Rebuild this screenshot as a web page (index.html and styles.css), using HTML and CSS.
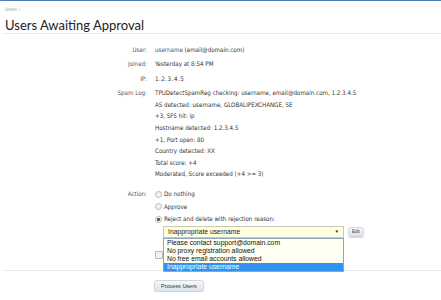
FILE: index.html
```html
<!DOCTYPE html>
<html lang="en">
<head>
    <meta charset="UTF-8">
    <meta name="viewport" content="width=device-width, initial-scale=1.0">
    <title>Users Awaiting Approval</title>
    <link rel="stylesheet" href="styles.css">
</head>
<body>
    <div class="topbar"></div>

    <div class="titlebar">
        <div class="crumbs">Users &rsaquo;</div>
        <h1>Users Awaiting Approval</h1>
    </div>

    <!-- Formulaire d'approbation -->
    <form class="approval">
        <dl class="row">
            <dt>User:</dt>
            <dd><a href="#">username</a> (email@domain.com)</dd>
        </dl>
        <dl class="row">
            <dt>Joined:</dt>
            <dd>Yesterday at 8:54 PM</dd>
        </dl>
        <dl class="row">
            <dt>IP:</dt>
            <dd class="mono">1.2.3.4.5</dd>
        </dl>
        <dl class="row">
            <dt>Spam Log:</dt>
            <dd>
                <div>TPUDetectSpamReg checking: username, email@domain.com, 1.2.3.4.5</div>
                <div>AS detected: username, GLOBALIPEXCHANGE, SE</div>
                <div>+3, SFS hit: ip</div>
                <div>Hostname detected: 1.2.3.4.5</div>
                <div>+1, Port open: 80</div>
                <div>Country detected: XX</div>
                <div>Total score: +4</div>
                <div>Moderated, Score exceeded (+4 &gt;= 3)</div>
            </dd>
        </dl>

        <dl class="row action">
            <dt>Action:</dt>
            <dd>
                <label class="option"><span class="radio"></span>Do nothing</label>
                <label class="option"><span class="radio"></span>Approve</label>
                <label class="option"><span class="radio checked"></span>Reject and delete with rejection reason:</label>

                <div class="reason">
                    <div class="select-wrap">
                        <div class="select">
                            <span>Inappropriate username</span>
                            <span class="arrow">&#9660;</span>
                        </div>
                        <ul class="dropdown">
                            <li>Please contact support@domain.com</li>
                            <li>No proxy registration allowed</li>
                            <li>No free email accounts allowed</li>
                            <li class="active">Inappropriate username</li>
                        </ul>
                    </div>
                    <button type="button" class="btn small">Edit</button>
                </div>

                <div class="check"><span class="box"></span></div>
            </dd>
        </dl>

        <div class="submit">
            <button type="button" class="btn">Process Users</button>
        </div>
    </form>
</body>
</html>
```

FILE: styles.css
```css
body {
    margin: 0;
    background: #fff;
    font-family: "DejaVu Sans Condensed", "DejaVu Sans", Verdana, sans-serif;
    font-stretch: condensed;
    font-size: 6.2px;
    color: #333;
}
.topbar {
    height: 1px;
    background: #4a7fb5;
}
.titlebar {
    padding: 5px 5px 0 2px;
    margin-left: 3px;
    border-bottom: 1px solid #e6e9ee;
}
.crumbs {
    font-size: 4.8px;
    color: #8a97a6;
    line-height: 7px;
}
h1 {
    margin: 4px 0 0;
    font-family: Lato, "Open Sans", sans-serif;
    font-stretch: normal;
    font-weight: normal;
    font-size: 13px;
    line-height: 16px;
    color: #222;
}
.approval {
    padding-top: 8px;
}
.row {
    display: grid;
    grid-template-columns: 155px 1fr;
    margin: 0;
    padding: 1.5px 0;
    line-height: 11.6px;
}
.row dt {
    text-align: right;
    color: #555;
    padding-right: 8px;
}
.row dd {
    margin: 0;
}
a {
    color: #2c5d90;
    text-decoration: none;
}
.mono {
    letter-spacing: 0.5px;
}
.action {
    margin-top: 5px;
}
.option {
    display: flex;
    align-items: center;
    gap: 2px;
    height: 12.5px;
}
.radio {
    width: 5px;
    height: 5px;
    border: 1px solid #b8b8b8;
    border-radius: 50%;
    background: #f2f2f2;
    position: relative;
}
.radio.checked::after {
    content: "";
    position: absolute;
    left: 1.25px;
    top: 1.25px;
    width: 2.5px;
    height: 2.5px;
    border-radius: 50%;
    background: #555;
}
.reason {
    display: flex;
    align-items: center;
    gap: 4px;
    margin: 0 0 0 8px;
}
.select-wrap {
    position: relative;
}
.select {
    width: 171px;
    height: 10px;
    padding: 0 4px;
    display: flex;
    align-items: center;
    justify-content: space-between;
    border: 1px solid #c9c9b0;
    background: #ffffe2;
    color: #222;
    font-family: "Liberation Sans", Arial, sans-serif;
    font-stretch: normal;
    font-size: 6.8px;
}
.arrow {
    font-size: 4.5px;
}
.dropdown {
    position: absolute;
    left: 0;
    top: 12px;
    width: 179px;
    margin: 0;
    padding: 0;
    list-style: none;
    border: 1px solid #8ea4c2;
    background: #fffff2;
    font-family: "Liberation Sans", Arial, sans-serif;
    font-stretch: normal;
    font-size: 6.8px;
    color: #111;
}
.dropdown li {
    height: 8px;
    line-height: 8px;
    padding-left: 3px;
}
.dropdown li.active {
    background: #3192ef;
    color: #fff;
}
.check {
    display: flex;
    align-items: center;
    margin-top: 12px;
    height: 10px;
}
.box {
    width: 6px;
    height: 6px;
    border: 1px solid #b8b8b8;
    border-radius: 1px;
    background: #f2f2f2;
}
.submit {
    margin: 9px 0 0 3px;
    border-top: 1px solid #e6e9ee;
    padding: 9px 0 0 151px;
}
.btn {
    font-family: "Liberation Sans", Arial, sans-serif;
    font-stretch: normal;
    font-size: 5.5px;
    color: #333;
    height: 12px;
    padding: 0 6px;
    border: 1px solid #cdd6e0;
    border-radius: 3px;
    background: linear-gradient(to bottom, #f7f9fb, #d9e2ec);
    box-shadow: 0 1px 1px rgba(0, 0, 0, 0.15);
}
.btn.small {
    height: 10px;
    padding: 0 3px;
    font-size: 4.5px;
}
```
